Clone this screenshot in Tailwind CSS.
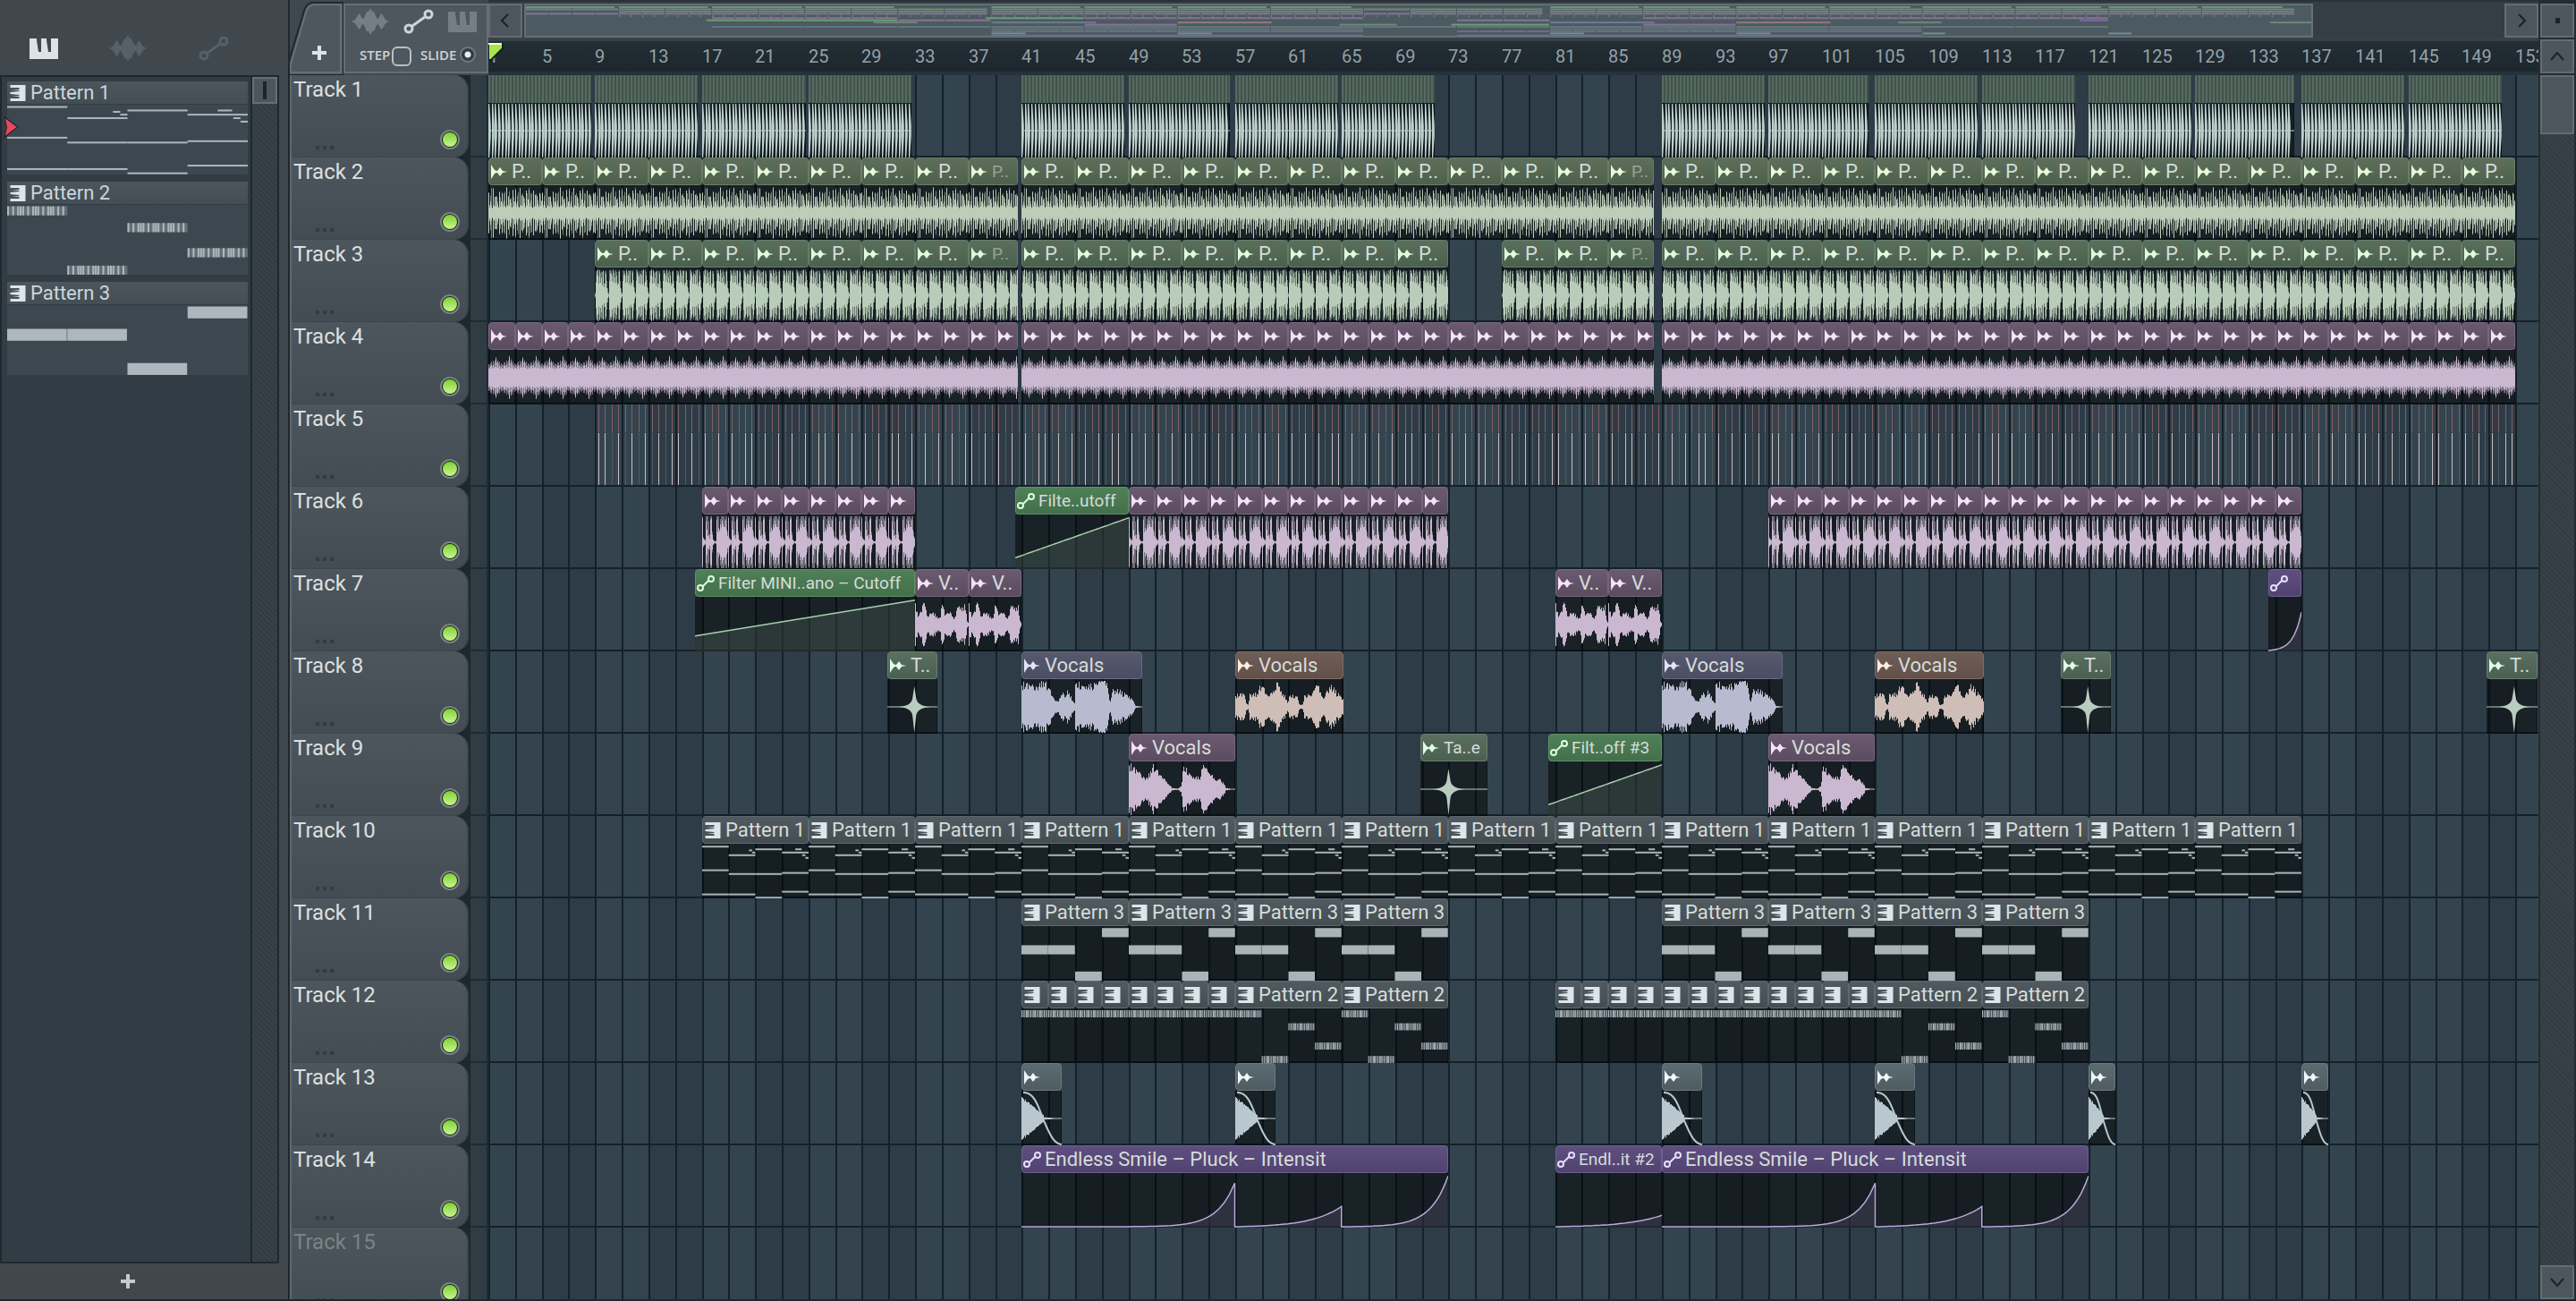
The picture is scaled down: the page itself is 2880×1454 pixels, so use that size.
<!DOCTYPE html>
<html lang="en">
<head>
  <meta charset="UTF-8" />
  <meta name="viewport" content="width=device-width, initial-scale=1.0" />
  <title>Playlist</title>
  <script src="https://cdn.jsdelivr.net/npm/@tailwindcss/browser@4"></script>
</head>
<body class="h-screen flex overflow-hidden bg-[#40484e] text-[22px] text-[#d3d8da] font-[Roboto,'Noto_Sans',sans-serif] border-b-2 border-[#1e272d]">

  <!-- Shared icons -->
  <svg class="hidden">
    <symbol id="piano" viewBox="0 0 32 23">
      <path fill="currentColor" d="M0 0H8V2L10 15H13V0H19V2L21 15H24V0H32V23H0Z" />
    </symbol>
    <symbol id="wave" viewBox="0 0 42 30">
      <path fill="currentColor" d="M0 15L4 13L7 8L9 6L12 12L14 11L17 4L19 4L21 0L23 4L25 4L28 11L30 12L33 6L35 8L38 13L42 15L38 17L35 22L33 24L30 18L28 19L25 26L23 26L21 30L19 26L17 26L14 19L12 18L9 24L7 22L4 17Z" />
    </symbol>
    <symbol id="link" viewBox="0 0 34 28">
      <g fill="none" stroke="currentColor" stroke-width="3">
        <circle cx="6" cy="22" r="4" /><circle cx="28" cy="6" r="4" /><path d="M10 19L24 9" />
      </g>
    </symbol>
    <symbol id="clip-link" viewBox="0 0 20 20">
      <g fill="none" stroke="currentColor" stroke-width="2">
        <circle cx="4" cy="15" r="3" /><circle cx="16" cy="5" r="3" /><path d="M7 13L13 7" />
      </g>
    </symbol>
    <symbol id="clip-audio" viewBox="0 0 18 18">
      <path fill="currentColor" d="M0 1L4 7L6 8L7 8L10 4L13 8L18 9L13 10L10 14L7 10L6 10L4 11L0 17Z" />
    </symbol>
    <symbol id="clip-pattern" viewBox="0 0 17 18">
      <path fill="currentColor" d="M0 0H17V18H0V15H10V13L2 12H10V11L0 10V8L10 7V6H2L10 5V3H0Z" />
    </symbol>
  </svg>

  <!-- Pattern picker -->
  <aside class="w-[322px] shrink-0 flex flex-col">
    <div class="h-[84px] shrink-0 pt-[24px] pl-[33px] flex items-center">
      <button aria-label="Patterns" class="text-[#dde2e4]"><svg class="w-8 h-[23px]"><use href="#piano" /></svg></button>
      <button aria-label="Audio clips" class="ml-[57px] text-[#566067]"><svg class="w-[42px] h-[30px]"><use href="#wave" /></svg></button>
      <button aria-label="Automation" class="ml-[58px] text-[#566067]"><svg class="w-[34px] h-7"><use href="#link" /></svg></button>
    </div>
    <div class="flex-1 min-h-0 flex mr-[10px] border-2 border-[#1f282e] bg-[#323c45]">
      <div id="patterns" class="relative flex-1 flex flex-col gap-2 pt-[5px] pl-[6px] pr-[3px]">
        <svg class="absolute left-[2px] top-[44px] w-[18px] h-6" viewBox="0 0 16 24" preserveAspectRatio="none"><path d="M1 1L14 12L1 23L3 12Z" fill="#ec4560" stroke="#20242a" stroke-width="1" /></svg>
      </div>
      <div class="w-[30px] border-l-2 border-[#1f282e] bg-[repeating-linear-gradient(45deg,#333b42_0_2px,#3a4249_2px_4px)]">
        <div class="h-[30px] border-2 border-[#666e74] bg-[#4d565c] flex justify-center items-center"><div class="w-1 h-5 bg-[#1d252a]"></div></div>
      </div>
    </div>
    <button aria-label="Add pattern" class="h-[40px] pr-9 flex justify-center items-center text-[#c5cacd]">
      <svg class="w-4 h-4" viewBox="0 0 16 16"><path d="M6 0H10V6H16V10H10V16H6V10H0V6H6Z" fill="currentColor" /></svg>
    </button>
  </aside>

  <main class="flex-1 min-w-0 flex flex-col border-l-2 border-[#1f282e]">
    <!-- Toolbar, overview and ruler -->
    <header class="h-[84px] shrink-0 flex">
      <button aria-label="Add track" class="w-[60px] h-[84px]">
        <svg class="w-[60px] h-[84px]" viewBox="0 0 60 84">
          <path d="M-2 84V72L16 12Q19 3 26 3H60V84Z" fill="#4e575d" stroke="#1f282e" stroke-width="2" />
          <path d="M1 81L1 72L18 14Q20 6 27 5H57V81Z" fill="none" stroke="#666f74" stroke-width="2" />
          <path d="M31 51H35V57H41V61H35V67H31V61H25V57H31Z" fill="#dfe3e4" />
        </svg>
      </button>
      <div class="w-[162px] mt-1 mb-[2px] border-2 border-[#666f74] bg-[#4e575d] text-[#cfd4d6]">
        <div class="h-[36px] pl-[7px] flex items-center gap-4">
          <button aria-label="Audio" class="text-[#757e83]"><svg class="w-[42px] h-[30px]"><use href="#wave" /></svg></button>
          <button aria-label="Automation"><svg class="w-[34px] h-7"><use href="#link" /></svg></button>
          <button aria-label="Patterns" class="text-[#757e83]"><svg class="w-[32px] h-[23px]"><use href="#piano" /></svg></button>
        </div>
        <div class="pt-[2px] pl-4 flex items-center text-[15px] font-semibold font-['Open_Sans','Noto_Sans',sans-serif]">
          <label for="step" class="w-[36px]">STEP</label>
          <input id="step" type="checkbox" class="appearance-none w-[22px] h-[22px] mt-2 mb-1 rounded-md border-2 border-[#b9bfc2]" />
          <label for="slide" class="ml-[10px] w-[44px]">SLIDE</label>
          <input id="slide" type="radio" checked class="appearance-none w-[18px] h-[18px] rounded-full border-2 border-[#6f797e] bg-[radial-gradient(#e8ecee_0_3px,#333c42_4px)]" />
        </div>
      </div>
      <div class="flex-1 min-w-0 flex flex-col">
        <div class="h-[42px] pt-[2px] flex bg-[#363e45] border-t-2 border-[#2a3238]">
          <button aria-label="Scroll left" class="w-[38px] mr-[2px] border-2 border-[#646c72] bg-[#4d565c] flex justify-center items-center">
            <svg class="w-3 h-4" viewBox="0 0 12 16"><path d="M9 1L2 8L9 15" fill="none" stroke="#1b2227" stroke-width="2" /></svg>
          </button>
          <div class="flex-[2000] border-2 border-[#646e73] bg-[#4c5b62]"><svg id="overview" class="block w-full h-full" viewBox="0 0 1996 34" preserveAspectRatio="none"></svg></div>
          <div class="flex-[214]"></div>
          <button aria-label="Scroll right" class="w-[38px] border-2 border-[#646c72] bg-[#4d565c] flex justify-center items-center">
            <svg class="w-3 h-4" viewBox="0 0 12 16"><path d="M3 1L10 8L3 15" fill="none" stroke="#1b2227" stroke-width="2" /></svg>
          </button>
        </div>
        <div id="ruler" class="relative flex-1 overflow-hidden border-y-4 border-t-[#364148] border-b-[#25323a] bg-linear-to-b from-[#232e35] to-[#1c262d] text-[20px] text-[#95a1a7]">
          <svg class="absolute z-10 left-0 top-[2px] w-[18px] h-5" viewBox="0 0 18 20"><path d="M0 0H16V6L3 19H0Z" fill="#a9e34f" stroke="#17202a" stroke-width="2" /><path d="M0 1H15" stroke="#f0ffc8" stroke-width="2" /></svg>
        </div>
      </div>
      <div class="w-[42px] pl-[2px] pr-[2px] pt-1 pb-[2px] flex flex-col gap-[2px] bg-[#242c32]">
        <button aria-label="Playlist options" class="flex-1 border-2 border-[#646c72] bg-[#4d565c] flex justify-center items-center"><span class="w-[5px] h-[6px] bg-[#1b2227]"></span></button>
        <button aria-label="Scroll up" class="flex-1 border-2 border-[#646c72] bg-[#4d565c] flex justify-center items-center">
          <svg class="w-4 h-3" viewBox="0 0 16 12"><path d="M1 10L8 2L15 10" fill="none" stroke="#1b2227" stroke-width="2" /></svg>
        </button>
      </div>
    </header>

    <div class="flex-1 min-h-0 flex">
      <div id="heads" class="w-[202px] shrink-0 overflow-hidden bg-[#1c272e] border-l-2 border-[#5f686d]"></div>
      <div class="w-[20px] shrink-0 border-r-2 border-[#1e2c35] bg-[repeating-linear-gradient(180deg,#2f3c44_0_90px,#1e2b33_90px_92px)]"></div>
      <!-- Clip canvas -->
      <div id="lanes" class="relative flex-1 overflow-hidden bg-[#33444f]"></div>
      <div class="w-[42px] shrink-0 flex flex-col border-x-2 border-[#242c32] bg-[repeating-linear-gradient(45deg,#343b42_0_2px,#3a4249_2px_4px)]">
        <div class="h-[66px] border-2 border-[#646c72] bg-[#4d565c]"></div>
        <button aria-label="Scroll down" class="mt-auto h-[38px] border-2 border-[#646c72] bg-[#4d565c] flex justify-center items-center">
          <svg class="w-4 h-3" viewBox="0 0 16 12"><path d="M1 2L8 10L15 2" fill="none" stroke="#1b2227" stroke-width="2" /></svg>
        </button>
      </div>
    </div>
  </main>

  <script>
    const ROW = 92;
    const BODY = 60;
    const BAR = 14.908;
    const LAST_BAR = 155;
    const barX = bar => Math.round((bar - 1) * BAR);

    const styles = {
      kick: { head: "bg-[repeating-linear-gradient(90deg,#566a5f_0_2px,#41534c_2px_4px)]", wave: "#bcd0cb", map: "#7c9a8c" },
      perc: { head: "bg-linear-to-b from-[#5d6f5b] to-[#4f604d] border-[#6a7c67]", icon: "#e4fbd8", wave: "#bccdb8", map: "#78957b" },
      clap: { head: "bg-linear-to-b from-[#5a6f5b] to-[#4c604e] border-[#667c67]", icon: "#defbdc", wave: "#b8cdb9", map: "#6f8c77" },
      pink: { head: "bg-linear-to-b from-[#6b5a6f] to-[#5b4c60] border-[#786580]", icon: "#f4e2f8", wave: "#c9b8cf", map: "#97799f" },
      blue: { head: "bg-linear-to-b from-[#57596f] to-[#4b4d62] border-[#67697f]", icon: "#e2e4fc", wave: "#b8bbcf", map: "#7a7fa5" },
      clay: { head: "bg-linear-to-b from-[#6f5d56] to-[#62504a] border-[#7f6c64]", icon: "#ffeadf", wave: "#cfbeb7", map: "#a08477" },
      tap: { head: "bg-linear-to-b from-[#5a6f60] to-[#4c6052] border-[#687e6e]", icon: "#defde6", wave: "#b8cdbf", map: "#76947f" },
      steel: { head: "bg-linear-to-b from-[#5c6b72] to-[#4f5d63] border-[#6a797f]", icon: "#eef8fc", wave: "#b9c8cf", map: "#7f99a5" },
      pattern: { head: "bg-linear-to-b from-[#505a60] to-[#444d52] border-[#5e686d]", icon: "#dbe5ea", wave: "#a9b3b8", map: "#6b7a82" },
      green: { head: "bg-linear-to-b from-[#4f8057] to-[#42704a] border-[#5e9166]", icon: "#dcfbe0", wave: "#a6cfac", map: "#6fb279" },
      violet: { head: "bg-linear-to-b from-[#5f4f80] to-[#514370] border-[#6f5e91]", icon: "#e8dcff", wave: "#b9a9dc", map: "#8471b5" }
    };

    // track, start bar, end bar, style, drawing, label
    const clips = [];
    const add = (track, start, end, style, kind, label = "", dim = false) => clips.push({ track, start, end, style, kind, label, dim });
    const repeat = (track, start, end, step, style, kind, label) => {
      for (let b = start; b < end; b += step) add(track, b, Math.min(b + step, end), style, kind, label, !Number.isInteger(end) && b + step > end);
    };

    [[1, 8.7], [9, 16.7], [17, 24.8], [25, 32.7], [41, 48.7], [49, 56.6], [57, 64.7], [65, 72], [89, 96.7], [97, 104.5],
     [105, 112.7], [113, 120], [121, 128.7], [129, 136.4], [137, 144.7], [145, 152]].forEach(([a, b]) => add(1, a, b, "kick", "kick"));
    [[1, 40.7], [41, 88.4], [89, 153]].forEach(([a, b]) => {
      repeat(2, a, b, 4, "perc", "perc", "P..");
      repeat(4, a, b, 2, "pink", "hat", "");
    });
    [[9, 40.7], [41, 73], [77, 88.4], [89, 153]].forEach(([a, b]) => repeat(3, a, b, 4, "clap", "clap", "P.."));
    [[17, 33], [49, 73], [97, 137]].forEach(([a, b]) => repeat(6, a, b, 2, "pink", "stab", ""));
    add(6, 40.5, 49, "green", "ramp", "Filte..utoff");
    add(7, 16.5, 33, "green", "ramp", "Filter MINI..ano – Cutoff");
    [33, 37, 81, 85].forEach(b => add(7, b, b + 4, "pink", "voxShort", "V.."));
    add(7, 134.5, 137, "violet", "curveEnd", "");
    [30.9, 118.9, 150.85].forEach(b => add(8, b, b + 3.8, "tap", "star", "T.."));
    [41, 89].forEach(b => add(8, b, b + 9.05, "blue", "voxBlue", "Vocals"));
    [57, 105].forEach(b => add(8, b, b + 8.15, "clay", "voxClay", "Vocals"));
    [49, 97].forEach(b => add(9, b, b + 8, "pink", "voxPink", "Vocals"));
    add(9, 70.9, 75.9, "tap", "starWide", "Ta..e");
    add(9, 80.5, 89, "green", "ramp", "Filt..off #3");
    repeat(10, 17, 137, 8, "pattern", "notes1", "Pattern 1");
    repeat(11, 41, 73, 8, "pattern", "notes3", "Pattern 3");
    repeat(11, 89, 121, 8, "pattern", "notes3", "Pattern 3");
    repeat(12, 41, 57, 2, "pattern", "notes2Short", "");
    repeat(12, 57, 73, 8, "pattern", "notes2", "Pattern 2");
    repeat(12, 81, 105, 2, "pattern", "notes2Short", "");
    repeat(12, 105, 121, 8, "pattern", "notes2", "Pattern 2");
    [41, 57, 89, 105].forEach(b => add(13, b, b + 3, "steel", "decay", ""));
    [121, 137].forEach(b => add(13, b, b + 2, "steel", "decay", ""));
    add(14, 41, 73, "violet", "curves", "Endless Smile – Pluck – Intensit");
    add(14, 81, 89, "violet", "curveLow", "Endl..it #2");
    add(14, 89, 121, "violet", "curves", "Endless Smile – Pluck – Intensit");

    // Repeatable noise so that every clip of a kind looks alike
    const noise = n => {
      const s = Math.sin(n * 127.1 + 11.7) * 43758.5453;
      return s - Math.floor(s);
    };

    // One vertical pixel column per x, mirrored around the middle
    function columns(w, color, amp, opacity = 1) {
      let d = "";
      for (let x = 0; x < w; x++) {
        const a = Math.max(0.015, Math.min(1, amp(x, x / w))) * (BODY / 2 - 1);
        d += `M${x} ${(BODY / 2 - a).toFixed(1)}h1v${(2 * a).toFixed(1)}h-1z`;
      }
      return `<path d="${d}" fill="${color}" fill-opacity="${opacity}"/>`;
    }

    // Column heights over one bar
    const shapes = {
      percSoft: [1, .4, .8, 1, .3, 1, .35, .8, .9, .7, .6, .3, .95, .8, .6],
      percHard: [.9, .25, .5, .3, .22, 1, .28, .75, .3, .65, .4, .22, .95, .3, .55],
      clapSoft: [.1, 1, 1, 1, .8, 1, .9, 1, 1, 1, .5, 1, 1, .6, .3],
      clapHard: [.03, .6, .9, 1, .6, 1, .55, .85, .5, 1, .4, .55, 1, .35, .15],
      hatSoft: [.55, .5, .6, .62, .5, .66, .6, .7, .85, .6, .72, .6, .66, .5, .6],
      hatHard: [.4, .36, .45, .5, .38, .5, .4, .45, .82, .4, .66, .4, .5, .36, .45],
      stabSoft: [1, .2, .12, .1, 1, 1, 1, .8, .3, 1, 1, .4, .1, .05, .03, .05, 1, 1, 1, .5, .9, 1, 1, 1, 1, .9, 1, 1, .4, .2],
      stabHard: [1, .15, .1, .05, .9, .5, .25, .3, .15, .9, 1, .3, .1, .05, .03, .05, .9, .4, .6, .45, .7, .6, .9, .7, .65, .6, .9, .5, .25, .15]
    };
    const wobble = (name, depth) => x => {
      const s = shapes[name];
      return s[x % s.length] * (1 - depth * noise(x));
    };

    function envelope(points) {
      return t => {
        for (let i = 1; i < points.length; i++) {
          const [x0, y0] = points[i - 1], [x1, y1] = points[i];
          if (t <= x1) return y0 + (y1 - y0) * (t - x0) / (x1 - x0 || 1);
        }
        return 0;
      };
    }

    const envelopes = {
      voxBlue: envelope([[0, 1], [.1, .85], [.17, 1.1], [.22, .9], [.27, .35], [.3, .25], [.33, .7], [.36, .35], [.38, .8], [.42, .25], [.44, .2], [.445, 1.15], [.55, .9], [.65, 1.1], [.71, 1.1], [.73, .2], [.76, .8], [.82, .65], [.92, .38], [.94, .05], [1, 0]]),
      voxClay: envelope([[0, .5], [.08, .55], [.1, .12], [.12, .12], [.13, .6], [.2, .55], [.24, 1], [.3, .5], [.38, 1], [.45, .5], [.48, .2], [.5, .55], [.57, .5], [.59, .1], [.62, .1], [.64, .55], [.7, .5], [.75, .95], [.82, .4], [.87, .95], [.95, .55], [1, .3]]),
      voxPink: envelope([[0, 1.1], [.05, .85], [.12, .6], [.17, .5], [.23, 1], [.27, .8], [.35, .4], [.4, .05], [.46, .03], [.49, .15], [.51, 1.1], [.6, .55], [.66, .5], [.7, 1.1], [.76, .6], [.88, .35], [.91, .05], [1, 0]]),
      voxShort: envelope([[0, 1], [.04, .4], [.1, .5], [.16, 1], [.22, .35], [.3, .6], [.42, .3], [.46, .25], [.49, 1], [.55, .5], [.65, .6], [.72, .3], [.8, .75], [.93, .8], [.97, .1], [1, .1]])
    };

    function stepNotes(x, y, w, h, color) {
      let out = `<rect x="${x}" y="${y}" width="${w}" height="${h}" fill="${color}" fill-opacity=".35"/>`;
      const hits = [0, 2, 4, 5, 6, 8, 10, 11, 12, 14, 16, 17, 18, 20, 22];
      hits.forEach(i => out += `<rect x="${x + w * i / 24}" y="${y}" width="${Math.max(1, w / 32)}" height="${h}" fill="${color}"/>`);
      return out;
    }

    function notes(kind, w, h, color) {
      const bar = (x, y, len, t) => `<rect x="${x * w}" y="${y * h}" width="${len * w}" height="${t}" fill="${color}"/>`;
      if (kind === "notes1") {
        return [[0, .02, .25], [.25, .18, .25], [.44, .09, .03], [.47, .13, .03], [.5, .07, .25], [.75, .13, .25], [.875, .07, .06], [.94, .18, .03], [.97, .23, .03],
                [0, .46, .25], [.25, .53, .25], [.5, .53, .25], [.75, .51, .25], [0, .91, .25], [.25, .91, .25], [.5, .97, .25], [.75, .86, .25]]
          .map(([x, y, l]) => bar(x, y, l, 2)).join("");
      }
      if (kind === "notes3") {
        return [[0, .34], [.25, .34], [.5, .83], [.75, .02]].map(([x, y]) => bar(x, y, .248, h * .17)).join("");
      }
      if (kind === "notes2") {
        return [[0, .02], [.25, .87], [.5, .26], [.75, .62]].map(([x, y]) => stepNotes(x * w, y * h, w / 4, h * .13, color)).join("");
      }
      return stepNotes(0, 1, w, 8, color);
    }

    // Exponential rise from x0 to x1 up to the given share of the height
    function rise(x0, x1, top, power, from = 0) {
      let d = "";
      for (let i = 0; i <= 40; i++) {
        const t = i / 40;
        const v = from + (top - from) * (power === 1 ? t : (Math.exp(power * t) - 1) / (Math.exp(power) - 1));
        d += `L${(x0 + (x1 - x0) * t).toFixed(1)} ${(59 - v * 58).toFixed(1)}`;
      }
      return d;
    }

    function automation(w, color, d) {
      return `<path d="M0 60${d}L${w} 60Z" fill="${color}" fill-opacity=".15"/><path d="${d.replace("L", "M")}" fill="none" stroke="${color}" stroke-width="1.5"/>`;
    }

    function star(w, cx, color) {
      return `<path d="M0 29.5H${w}V30.5H0Z" fill="${color}"/><path d="M${cx - 18} 30Q${cx - 3} 29 ${cx - 2} 20L${cx} 7L${cx + 2} 20Q${cx + 3} 29 ${cx + 18} 30Q${cx + 3} 31 ${cx + 2} 40L${cx} 59L${cx - 2} 40Q${cx - 3} 31 ${cx - 18} 30Z" fill="${color}"/>`;
    }

    function draw(kind, w, color) {
      switch (kind) {
        case "kick": {
          let d = `M0 29.5H${w}V30.5H0Z`;
          for (let x = 0; x < w - 3; x += BAR / 4) {
            d += `M${Math.round(x)} 0h1.2l1.6 24v12l-1.6 24h-1.2z`;
          }
          return `<path d="${d}" fill="${color}"/>`;
        }
        case "perc": return columns(w, color, wobble("percSoft", .3), .55) + columns(w, color, wobble("percHard", .2));
        case "clap": return columns(w, color, wobble("clapSoft", .1), .5) + columns(w, color, wobble("clapHard", .25));
        case "hat": return columns(w, color, wobble("hatSoft", .08), .55) + columns(w, color, wobble("hatHard", .1));
        case "stab": return columns(w, color, wobble("stabSoft", 0), .5) + columns(w, color, wobble("stabHard", .1));
        case "voxBlue": case "voxClay": case "voxPink": case "voxShort":
          return columns(w, color, (x, t) => envelopes[kind](t) * (.62 + .38 * noise(x + 2)));
        case "star": return star(w, w * .54, color);
        case "starWide": return star(w, w * .42, color);
        case "decay":
          return columns(w, color, (x, t) => t < .55 ? (.8 - 1.25 * t) * (.93 + .14 * noise(x)) : .1 * (1 - t)) +
            `<path d="M2 1C${w * .35} 0 ${w * .45} 22 ${w * .57} 34S${w * .8} 59 ${w} 59" fill="none" stroke="${color}" stroke-width="2"/>`;
        case "ramp": return automation(w, color, rise(0, w, .97, 1, w > 200 ? .28 : .2));
        case "curves": return automation(w, color, rise(0, w / 2, .84, 12) + `L${w / 2} 59` + rise(w / 2, w * .75, .39, 3.5) + `L${w * .75} 59` + rise(w * .75, w, .98, 6));
        case "curveLow": return automation(w, color, rise(0, w, .22, 3));
        case "curveEnd": return automation(w, color, rise(0, w, .74, 4));
        default: return notes(kind, w, BODY, color);
      }
    }

    const lanes = document.getElementById("lanes");

    // Grid: lighter and darker groups of four bars, a line every two bars
    let grid = "";
    for (let b = 5; b < LAST_BAR; b += 8) grid += `<rect x="${barX(b)}" y="0" width="${barX(b + 4) - barX(b)}" height="100%" fill="#2d3c47"/>`;
    for (let b = 1; b < LAST_BAR; b += 2) grid += `<rect x="${barX(b)}" y="0" width="2" height="100%" fill="#13212b"/>`;
    for (let t = 1; t < 15; t++) grid += `<rect x="0" y="${t * ROW - 2}" width="100%" height="2" fill="#13212b"/>`;
    // Short slices of track 5
    for (let x = barX(9) + 4, i = 0; x < barX(153); x = barX(9) + 4 + Math.round(++i * BAR / 2)) {
      const bright = [0, 1, 3, 5, 7, 9].includes(i % 11);
      grid += `<rect x="${x}" y="${ROW * 4}" width="1" height="31" fill="#805f63"/>`;
      grid += `<rect x="${x}" y="${ROW * 4 + 32}" width="1" height="58" fill="${bright ? "#cfbdbf" : "#53595f"}"/>`;
    }
    lanes.innerHTML = `<svg class="absolute inset-0 w-full h-full" shape-rendering="crispEdges">${grid}</svg>`;

    clips.forEach(c => {
      const s = styles[c.style];
      const left = barX(c.start);
      const w = barX(c.end) - left;
      const isLink = c.style === "green" || c.style === "violet";
      const icon = c.style === "pattern" ? "clip-pattern" : isLink ? "clip-link" : "clip-audio";
      const small = c.dim || c.style === "green" || c.kind === "curveLow" || c.kind === "starWide";
      const el = document.createElement("div");
      el.className = "absolute h-[92px]";
      el.style.left = left + "px";
      el.style.top = (c.track - 1) * ROW + "px";
      el.style.width = w + "px";
      const head = c.style === "kick"
        ? `<div class="h-[31px] ${s.head}"></div>`
        : `<div class="h-[31px] rounded-sm border ${s.head} flex items-center ${isLink ? "gap-1 pl-[1px]" : "gap-[5px] pl-[2px]"} overflow-hidden whitespace-nowrap">
             <svg class="${isLink ? "w-5 h-5" : "w-[18px] h-[18px]"} shrink-0" style="color:${s.icon}"><use href="#${icon}" /></svg>
             ${c.label ? `<span class="leading-7 text-[#d5dcd9] ${small ? "text-[19px]" : ""} ${c.dim ? "opacity-50" : ""}">${c.label}</span>` : ""}
           </div>`;
      el.innerHTML = `${head}<div class="h-[61px] pt-[1px] bg-black/50 border-r border-black/40"><svg class="block" width="${w}" height="${BODY}" viewBox="0 0 ${w} ${BODY}">${draw(c.kind, w, s.wave)}</svg></div>`;
      lanes.appendChild(el);
    });

    // Ruler numbers
    const ruler = document.getElementById("ruler");
    for (let b = 1; b <= 153; b += 4) {
      const n = document.createElement("span");
      n.className = "absolute top-[3px] leading-7";
      n.style.left = barX(b) + "px";
      n.textContent = b;
      ruler.appendChild(n);
    }

    // Overview of the whole song
    let map = "";
    clips.forEach(c => {
      const x = (c.start - 1) * 13.01;
      map += `<rect x="${x}" y="${1 + (c.track - 1) * 2.45}" width="${(c.end - c.start) * 13.01 - 1}" height="2" fill="${styles[c.style].map}" fill-opacity=".8"/>`;
    });
    for (let b = 9; b < 153; b += 1) map += `<rect x="${(b - 1) * 13.01}" y="11" width="1" height="2" fill="#97799f"/>`;
    document.getElementById("overview").innerHTML = map;

    // Track headers
    const heads = document.getElementById("heads");
    for (let t = 1; t <= 15; t++) {
      heads.innerHTML += `
        <div class="relative h-[92px] w-[198px] rounded-r-2xl border-r-2 border-b border-[#3c464c] bg-linear-to-b from-[#4d565c] to-[#434c52] pl-[2px]">
          <div class="text-[24px] leading-8 ${t === 15 ? "text-[#7b8387]" : "text-[#dce0e1]"}">Track ${t}</div>
          <div class="absolute left-[27px] top-[79px] flex gap-1"><i class="w-1 h-1 bg-[#333b40]"></i><i class="w-1 h-1 bg-[#333b40]"></i><i class="w-1 h-1 bg-[#333b40]"></i></div>
          <button aria-label="Mute track ${t}" class="absolute right-[8px] top-[61px] w-[22px] h-[22px] rounded-full border-2 border-[#7b8488] bg-[#12240c] p-[1px]"><span class="block w-4 h-4 rounded-full bg-linear-to-b from-[#7ed02e] to-[#c9f58e]"></span></button>
        </div>`;
    }

    // Picker entries
    const picker = document.getElementById("patterns");
    [1, 2, 3].forEach(n => {
      picker.innerHTML += `
        <button class="block text-left h-[104px]">
          <span class="h-[25px] flex items-center gap-[5px] pl-[3px] bg-linear-to-b from-[#4c555c] to-[#454e55] text-[#cdd6db]">
            <svg class="w-[18px] h-[18px] text-[#dbe5ea]"><use href="#clip-pattern" /></svg><span class="leading-6">Pattern ${n}</span>
          </span>
          <svg class="block mt-[1px] w-full h-[78px] bg-[#3d474f]" viewBox="0 0 269 78" preserveAspectRatio="none">${notes("notes" + n, 269, 78, "#adb7bd")}</svg>
        </button>`;
    });
  </script>
</body>
</html>
